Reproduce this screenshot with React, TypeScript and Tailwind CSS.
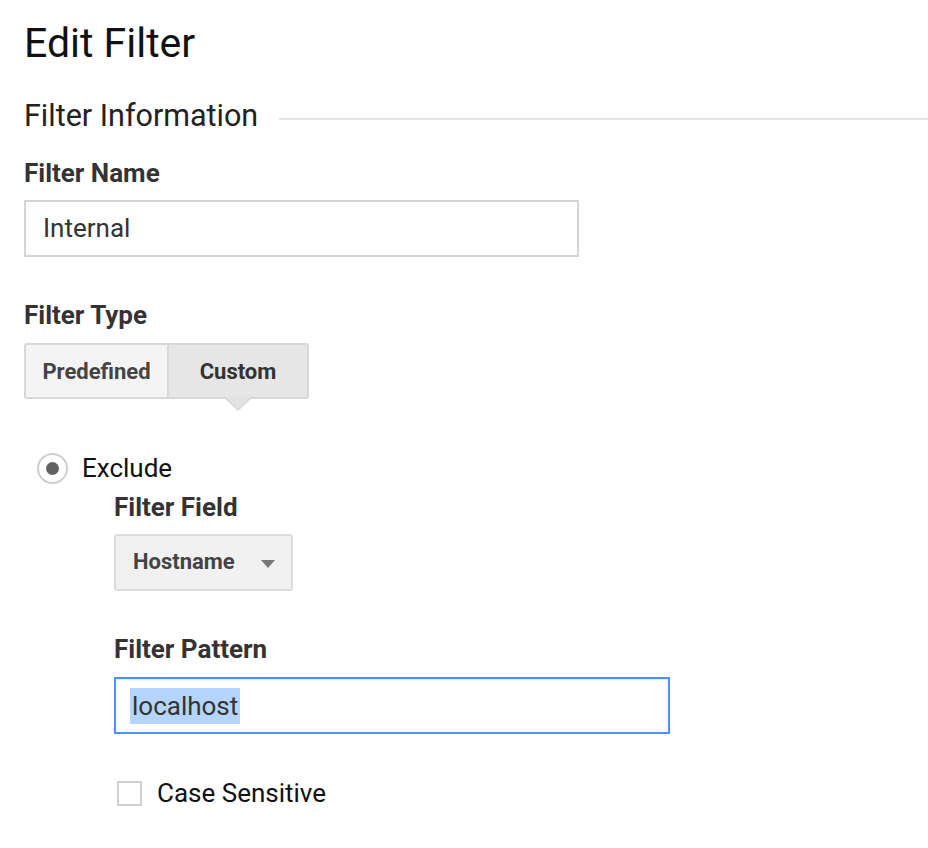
import React from "react";

const font = { fontFamily: "Roboto, 'Liberation Sans', Arial, sans-serif" };

function Label({ children, className = "" }: { children: React.ReactNode; className?: string }) {
  return <div className={`text-[26px] leading-[32px] font-bold text-[#333333] ${className}`}>{children}</div>;
}

export default function App() {
  return (
    <div className="min-h-[848px] w-[928px] bg-white pl-[24px] pt-[19px] overflow-hidden" style={font}>
      <h1 className="text-[41px] leading-[48px] font-normal text-[#111111]">Edit Filter</h1>

      {/* Section header */}
      <div className="mt-[31px] flex items-center">
        <div className="text-[30.5px] leading-[36px] text-[#222222] whitespace-nowrap">Filter Information</div>
        <div className="ml-[21px] mt-[6px] h-[2px] flex-1 bg-[#e2e2e2]" />
      </div>

      {/* Filter name */}
      <Label className="mt-[23px]">Filter Name</Label>
      <div className="mt-[11px] flex h-[57px] w-[555px] items-center border-2 border-[#d4d4d4] pl-[17px] text-[26px] text-[#333333]">
        Internal
      </div>

      {/* Filter type */}
      <Label className="mt-[42px]">Filter Type</Label>
      <div className="mt-[12px] flex w-[285px]">
        <div className="flex h-[56px] w-[143px] items-center justify-center rounded-l-[3px] border-2 border-r-0 border-[#d8d8d8] bg-[#f4f4f4] text-[22px] font-bold text-[#444444]">
          Predefined
        </div>
        <div className="relative flex h-[56px] flex-1 items-center justify-center rounded-r-[3px] border-2 border-[#d8d8d8] bg-[#e6e6e6] text-[22px] font-bold text-[#333333]">
          Custom
          <svg className="absolute left-1/2 top-full -translate-x-1/2 -mt-[2px]" width="30" height="16" viewBox="0 0 30 16">
            <path d="M0 1 L15 15 L30 1" fill="#e2e2e2" stroke="#d8d8d8" strokeWidth="1.5" />
            <rect x="0" y="0" width="30" height="1.5" fill="#e6e6e6" />
          </svg>
        </div>
      </div>

      {/* Exclude radio */}
      <div className="mt-[53px] flex items-center">
        <div className="ml-[13px] flex h-[31px] w-[31px] items-center justify-center rounded-full border-2 border-[#cfcfcf] bg-white">
          <div className="h-[13px] w-[13px] rounded-full bg-[#616161]" />
        </div>
        <div className="ml-[14px] text-[26px] leading-[32px] text-[#111111]">Exclude</div>
      </div>

      <div className="ml-[90px]">
        <Label className="mt-[7px]">Filter Field</Label>
        <div className="mt-[11px] flex h-[57px] w-[179px] items-center justify-between rounded-[3px] border-2 border-[#dcdcdc] bg-[#f1f1f1] pb-[2px] pl-[17px] pr-[16px]">
          <span className="text-[22px] font-bold text-[#444444]">Hostname</span>
          <svg className="mt-[4px]" width="14" height="8" viewBox="0 0 14 8">
            <path d="M0 0 L14 0 L7 8 Z" fill="#777777" />
          </svg>
        </div>

        <Label className="mt-[42px]">Filter Pattern</Label>
        <div className="mt-[12px] flex h-[57px] w-[556px] items-center border-2 border-[#4d90fe] pl-[14px] text-[26px] text-[#333333] shadow-[inset_0_1px_2px_rgba(0,0,0,0.1)]">
          <span className="bg-[#b4d5fe] px-[2px] leading-[36px]">localhost</span>
        </div>

        <div className="mt-[43px] flex items-center">
          <div className="ml-[3px] h-[25px] w-[25px] border-2 border-[#cfcfcf] bg-white" />
          <div className="ml-[15px] text-[26px] leading-[32px] text-[#111111]">Case Sensitive</div>
        </div>
      </div>
    </div>
  );
}
